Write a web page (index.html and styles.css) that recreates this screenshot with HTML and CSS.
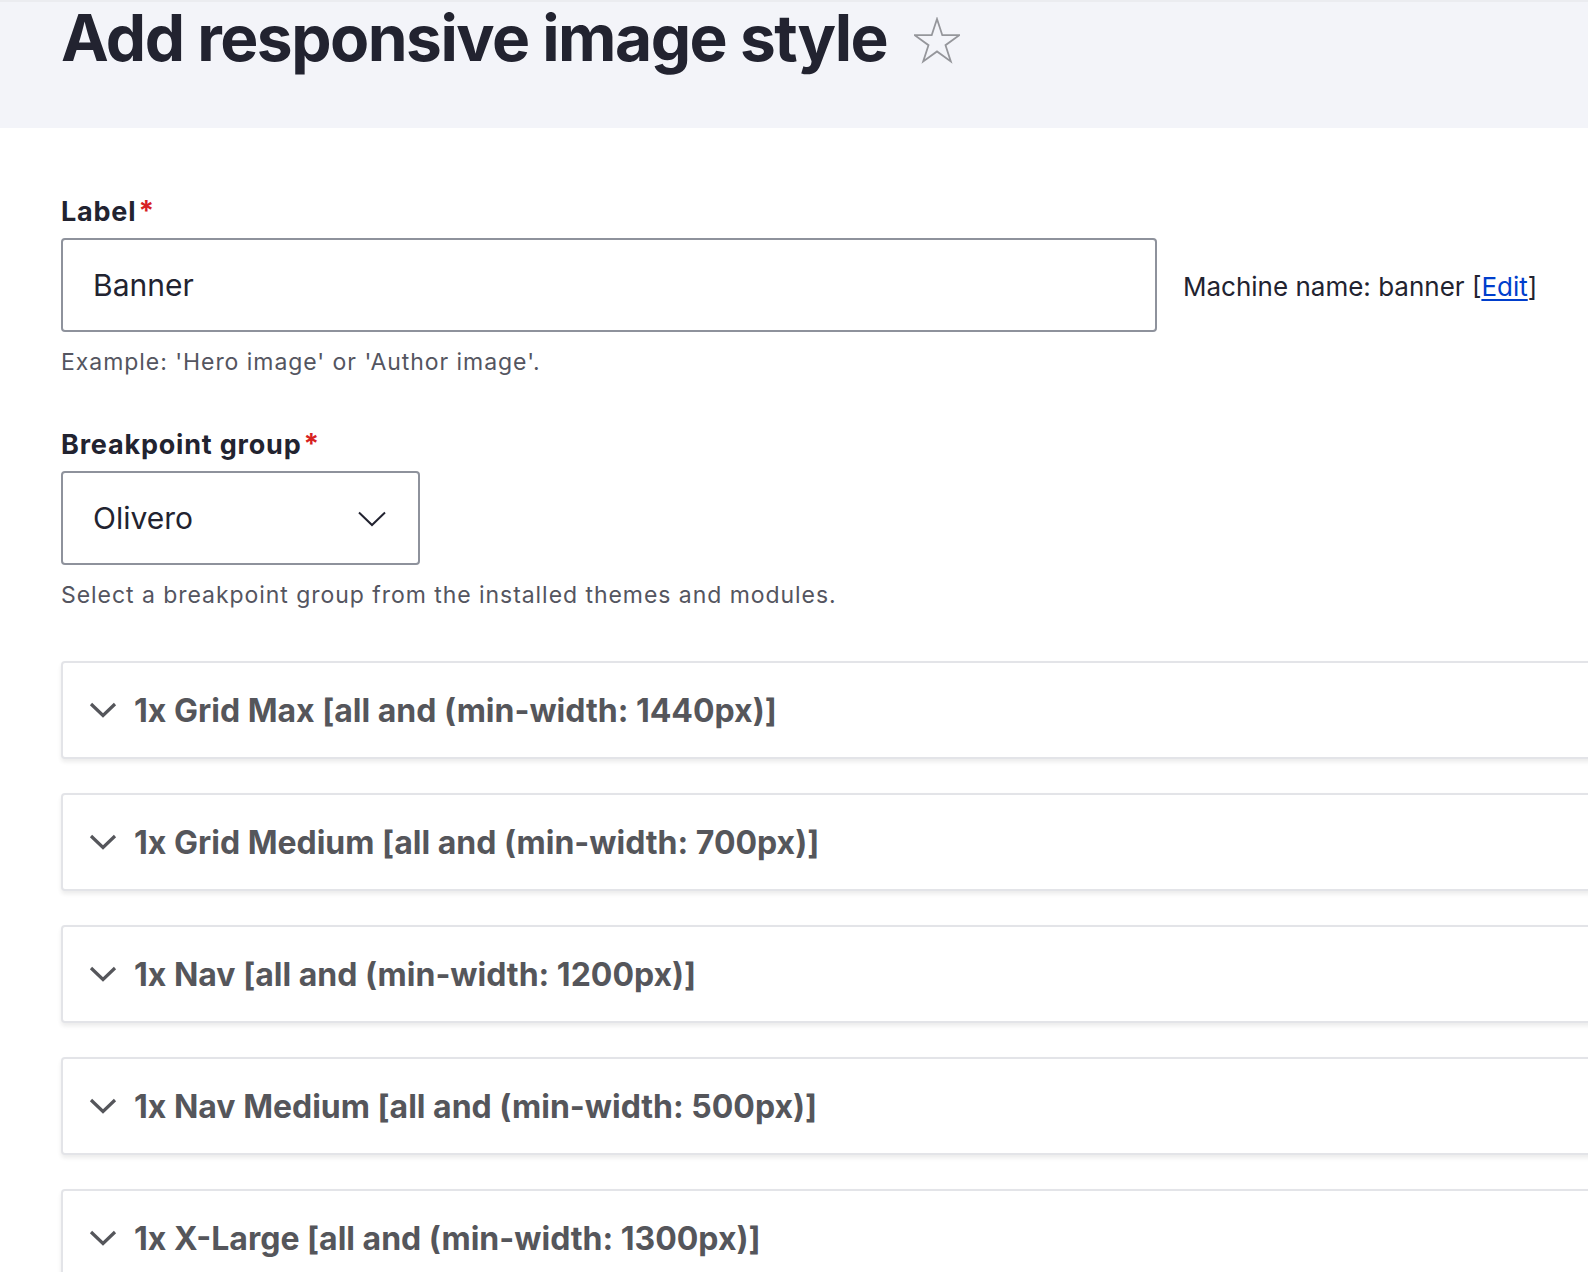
FILE: index.html
```html
<!DOCTYPE html>
<html lang="en">
<head>
<meta charset="utf-8">
<title>Add responsive image style</title>
<link rel="stylesheet" href="styles.css">
</head>
<body>
<header class="page-header">
  <h1 class="page-title">Add responsive image style<span class="fav-star" aria-label="Add to shortcuts"><svg width="46" height="47" viewBox="0 0 46 47"><polygon points="23,2 28.3,18.2 45.3,18.2 31.5,28.2 36.8,44.4 23,34.4 9.2,44.4 14.5,28.2 0.7,18.2 17.7,18.2" fill="none" stroke="#95969b" stroke-width="1.8" stroke-linejoin="miter"/></svg></span></h1>
</header>
<main class="content">
  <form class="form">
    <div class="form-item">
      <div class="form-label">Label<span class="req">*</span></div>
      <div class="field-row">
        <div class="text-input">Banner</div>
        <span class="machine-name">Machine name: banner [<a href="#" class="link">Edit</a>]</span>
      </div>
      <div class="description">Example: 'Hero image' or 'Author image'.</div>
    </div>
    <div class="form-item form-item--second">
      <div class="form-label">Breakpoint group<span class="req">*</span></div>
      <div class="select-input">
        <span>Olivero</span>
        <svg class="select-chevron" width="28" height="16" viewBox="0 0 28 16"><polyline points="1,1.5 14,14 27,1.5" fill="none" stroke="#222330" stroke-width="2"/></svg>
      </div>
      <div class="description">Select a breakpoint group from the installed themes and modules.</div>
    </div>
    <div class="details-list">
      <div class="details"><div class="summary"><svg class="sum-chevron" width="28" height="16" viewBox="0 0 28 16"><polyline points="2,2 14,13.5 26,2" fill="none" stroke="#55565b" stroke-width="3.2"/></svg><span>1x Grid Max [all and (min-width: 1440px)]</span></div></div>
      <div class="details"><div class="summary"><svg class="sum-chevron" width="28" height="16" viewBox="0 0 28 16"><polyline points="2,2 14,13.5 26,2" fill="none" stroke="#55565b" stroke-width="3.2"/></svg><span>1x Grid Medium [all and (min-width: 700px)]</span></div></div>
      <div class="details"><div class="summary"><svg class="sum-chevron" width="28" height="16" viewBox="0 0 28 16"><polyline points="2,2 14,13.5 26,2" fill="none" stroke="#55565b" stroke-width="3.2"/></svg><span>1x Nav [all and (min-width: 1200px)]</span></div></div>
      <div class="details"><div class="summary"><svg class="sum-chevron" width="28" height="16" viewBox="0 0 28 16"><polyline points="2,2 14,13.5 26,2" fill="none" stroke="#55565b" stroke-width="3.2"/></svg><span>1x Nav Medium [all and (min-width: 500px)]</span></div></div>
      <div class="details"><div class="summary"><svg class="sum-chevron" width="28" height="16" viewBox="0 0 28 16"><polyline points="2,2 14,13.5 26,2" fill="none" stroke="#55565b" stroke-width="3.2"/></svg><span>1x X-Large [all and (min-width: 1300px)]</span></div></div>
    </div>
  </form>
</main>
</body>
</html>
```
FILE: styles.css
```css
html, body {
  margin: 0;
  padding: 0;
}
body {
  font-family: Inter, "Noto Sans", sans-serif;
  color: #222330;
  background: #ffffff;
  overflow: hidden;
}
.page-header {
  box-sizing: border-box;
  height: 128px;
  background: #f3f4f9;
  border-top: 2px solid #ebecf0;
  padding-left: 61px;
}
.page-title {
  margin: -2px 0 0 0;
  font-size: 64px;
  line-height: 76px;
  font-weight: 700;
  letter-spacing: -1.5px;
  color: #222330;
  display: flex;
  align-items: center;
}
.fav-star {
  display: inline-flex;
  margin-left: 27px;
  margin-top: 4px;
}
.content {
  padding-left: 61px;
}
.form {
  padding-top: 66px;
}
.form-item--second {
  margin-top: 48px;
}
.form-label {
  font-size: 27px;
  line-height: 34px;
  font-weight: 700;
  letter-spacing: 0.8px;
}
.req {
  color: #d72222;
  font-size: 28px;
  margin-left: 2px;
}
.field-row {
  display: flex;
  align-items: baseline;
  margin-top: 9px;
}
.text-input {
  box-sizing: border-box;
  width: 1096px;
  height: 94px;
  border: 2px solid #8e929c;
  border-radius: 4px;
  padding: 0 30px;
  font-size: 30px;
  line-height: 90px;
}
.machine-name {
  margin-left: 26px;
  font-size: 26px;
}
.link {
  color: #003ecc;
  text-decoration: underline;
  text-underline-offset: 3px;
}
.description {
  margin-top: 14px;
  font-size: 23px;
  line-height: 33px;
  letter-spacing: 0.95px;
  color: #545560;
}
.select-input {
  box-sizing: border-box;
  margin-top: 9px;
  width: 359px;
  height: 94px;
  border: 2px solid #8e929c;
  border-radius: 4px;
  padding: 0 32px 0 30px;
  font-size: 30px;
  display: flex;
  align-items: center;
  justify-content: space-between;
}
.select-chevron {
  margin-top: 2px;
}
.details-list {
  margin-top: 49px;
  margin-right: -60px;
  display: flex;
  flex-direction: column;
  gap: 34px;
}
.details {
  box-sizing: border-box;
  height: 98px;
  border: 2px solid #e3e4e8;
  border-radius: 4px;
  background: #ffffff;
  box-shadow: 0 3px 4px rgba(0, 0, 0, 0.08);
}
.summary {
  display: flex;
  align-items: center;
  height: 100%;
  padding-left: 26px;
  font-size: 32px;
  font-weight: 700;
  color: #55565b;
  letter-spacing: 0;
}
.sum-chevron {
  margin-right: 17px;
}
```
